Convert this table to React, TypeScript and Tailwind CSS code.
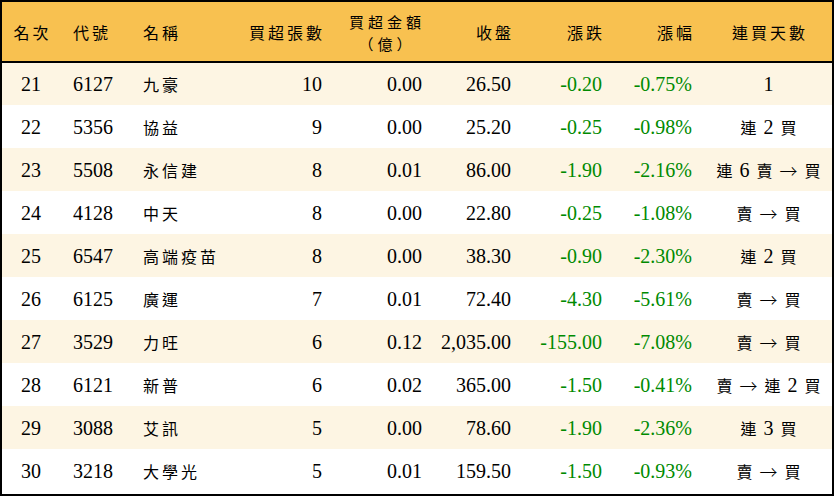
import React from 'react';

type Row = {
  rank: number;
  code: string;
  name: string;
  lots: number;
  amount: string;
  close: string;
  change: string;
  pct: string;
  streak: string;
};

const rows: Row[] = [
  { rank: 21, code: '6127', name: '九豪', lots: 10, amount: '0.00', close: '26.50', change: '-0.20', pct: '-0.75%', streak: '1' },
  { rank: 22, code: '5356', name: '協益', lots: 9, amount: '0.00', close: '25.20', change: '-0.25', pct: '-0.98%', streak: '連 2 買' },
  { rank: 23, code: '5508', name: '永信建', lots: 8, amount: '0.01', close: '86.00', change: '-1.90', pct: '-2.16%', streak: '連 6 賣 → 買' },
  { rank: 24, code: '4128', name: '中天', lots: 8, amount: '0.00', close: '22.80', change: '-0.25', pct: '-1.08%', streak: '賣 → 買' },
  { rank: 25, code: '6547', name: '高端疫苗', lots: 8, amount: '0.00', close: '38.30', change: '-0.90', pct: '-2.30%', streak: '連 2 買' },
  { rank: 26, code: '6125', name: '廣運', lots: 7, amount: '0.01', close: '72.40', change: '-4.30', pct: '-5.61%', streak: '賣 → 買' },
  { rank: 27, code: '3529', name: '力旺', lots: 6, amount: '0.12', close: '2,035.00', change: '-155.00', pct: '-7.08%', streak: '賣 → 買' },
  { rank: 28, code: '6121', name: '新普', lots: 6, amount: '0.02', close: '365.00', change: '-1.50', pct: '-0.41%', streak: '賣 → 連 2 買' },
  { rank: 29, code: '3088', name: '艾訊', lots: 5, amount: '0.00', close: '78.60', change: '-1.90', pct: '-2.36%', streak: '連 3 買' },
  { rank: 30, code: '3218', name: '大學光', lots: 5, amount: '0.01', close: '159.50', change: '-1.50', pct: '-0.93%', streak: '賣 → 買' },
];

const serif = "font-['Liberation_Serif','Noto_Sans_CJK_TC',serif]";
const cjk = "font-['Noto_Sans_CJK_TC',sans-serif] tracking-[3px]";

export default function App() {
  return (
    <div className={`w-[834px] h-[496px] border-2 border-black bg-white overflow-hidden ${serif} text-[20px] text-black`}>
      <table className="w-full table-fixed border-collapse">
        <colgroup>
          <col className="w-[58px]" />
          <col className="w-[70px]" />
          <col className="w-[110px]" />
          <col className="w-[95px]" />
          <col className="w-[100px]" />
          <col className="w-[89px]" />
          <col className="w-[91px]" />
          <col className="w-[90px]" />
          <col className="w-[127px]" />
        </colgroup>
        <thead>
          <tr className="h-[60px] bg-[#f8c150] border-b-2 border-black text-[16px]">
            <th className={`${cjk} font-normal text-center pl-[3px]`}>名次</th>
            <th className={`${cjk} font-normal text-left pl-[13px]`}>代號</th>
            <th className={`${cjk} font-normal text-left pl-[13px]`}>名稱</th>
            <th className={`${cjk} font-normal text-right pr-[10px]`}>買超張數</th>
            <th className={`${cjk} font-normal text-right pr-[10px]`}>
              <span className="inline-flex flex-col items-center text-[15px] tracking-[4px] leading-[22px]">
                <span>買超金額</span>
                <span>（億）</span>
              </span>
            </th>
            <th className={`${cjk} font-normal text-right pr-[10px]`}>收盤</th>
            <th className={`${cjk} font-normal text-right pr-[10px]`}>漲跌</th>
            <th className={`${cjk} font-normal text-right pr-[10px]`}>漲幅</th>
            <th className={`${cjk} font-normal text-center pl-[3px]`}>連買天數</th>
          </tr>
        </thead>
        <tbody>
          {rows.map((r, i) => (
            <tr key={r.rank} className={`h-[43px] ${i % 2 === 0 ? 'bg-[#fdf5e3]' : 'bg-white'}`}>
              <td className="text-center">{r.rank}</td>
              <td className="text-left pl-[13px]">{r.code}</td>
              <td className={`text-left pl-[13px] text-[16px] ${cjk}`}>{r.name}</td>
              <td className="text-right pr-[13px]">{r.lots}</td>
              <td className="text-right pr-[13px]">{r.amount}</td>
              <td className="text-right pr-[13px]">{r.close}</td>
              <td className="text-right pr-[13px] text-[#008a00]">{r.change}</td>
              <td className="text-right pr-[13px] text-[#008a00]">{r.pct}</td>
              <td className="text-center">
                <Streak text={r.streak} />
              </td>
            </tr>
          ))}
        </tbody>
      </table>
    </div>
  );
}

function Streak({ text }: { text: string }) {
  // digits stay serif, hanzi and the arrow get the CJK face
  const parts = text.split(' ');
  return (
    <span className="inline-flex items-center gap-[7px] whitespace-nowrap">
      {parts.map((p, i) =>
        /[0-9]/.test(p) ? (
          <span key={i}>{p}</span>
        ) : p === '→' ? (
          <span key={i} className="font-['Noto_Sans_CJK_TC',sans-serif] text-[18px] font-light leading-none">→</span>
        ) : (
          <span key={i} className="font-['Noto_Sans_CJK_TC',sans-serif] text-[16px]">{p}</span>
        )
      )}
    </span>
  );
}
